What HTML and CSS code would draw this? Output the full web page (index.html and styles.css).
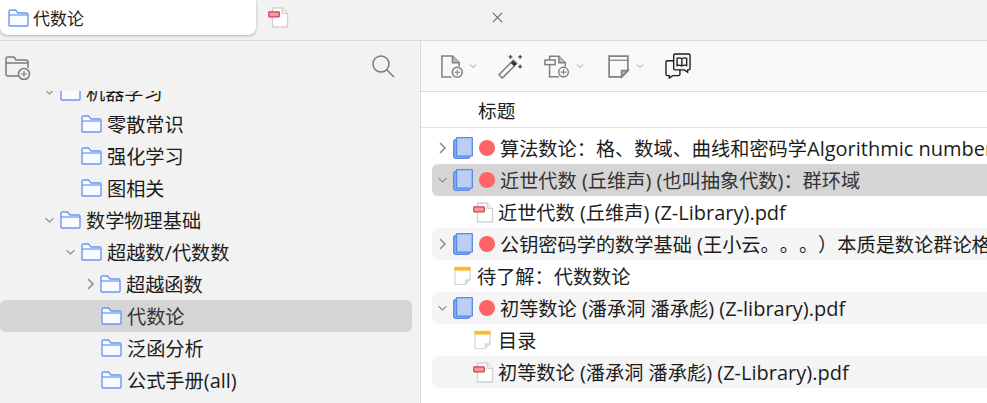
FILE: index.html
```html
<!DOCTYPE html>
<html lang="zh">
<head>
  <meta charset="UTF-8">
  <title>代数论</title>
  <link rel="stylesheet" href="styles.css">
</head>
<body>

<svg class="defs" width="0" height="0">
  <symbol id="folder" viewBox="0 0 21 18">
    <path d="M1 16V2.500Q1 1 2.500 1H7.500L10 4H18.700Q20 4 20 5.500V16Q20 17 19 17H2Q1 17 1 16Z" fill="#f8fbff" stroke="#6d97f0" stroke-width="1.400"/>
    <path d="M1 6H20" stroke="#6d97f0" stroke-width="1.200"/>
  </symbol>
  <symbol id="book" viewBox="0 0 20 22">
    <rect x="0.700" y="2.500" width="16" height="18.800" rx="2" fill="#8fadf0" stroke="#5b87e8" stroke-width="1.300"/>
    <rect x="3.500" y="0.700" width="15.800" height="18.500" rx="0.500" fill="#bccdf4" stroke="#5b87e8" stroke-width="1.300"/>
  </symbol>
  <symbol id="pdf" viewBox="0 0 21 21">
    <path d="M4.500 1H14L19.500 6.500V20H4.500Z" fill="#fff" stroke="#d2d2d2" stroke-width="1.300"/>
    <path d="M14 1V6.500H19.500" fill="#f0f0f0" stroke="#d2d2d2" stroke-width="1.200"/>
    <rect x="0.800" y="4.800" width="10.500" height="5" rx="0.500" fill="#f39aa5" stroke="#d63c50" stroke-width="1.200"/>
  </symbol>
  <symbol id="note" viewBox="0 0 18 20">
    <path d="M1 1H17V14L12 19H1Z" fill="#fff" stroke="#d4d4d4" stroke-width="1.300"/>
    <path d="M17 14H12V19Z" fill="#e2e2e2" stroke="#d4d4d4"/>
    <rect x="0.500" y="0.300" width="17" height="4" fill="#fdb92c"/>
  </symbol>
  <symbol id="chev-right" viewBox="0 0 10 14">
    <path d="M2.500 2L7.500 7L2.500 12" fill="none" stroke="#8a8a8a" stroke-width="1.500"/>
  </symbol>
  <symbol id="chev-down" viewBox="0 0 14 10">
    <path d="M2 2.500L7 7.500L12 2.500" fill="none" stroke="#8a8a8a" stroke-width="1.400"/>
  </symbol>
  <symbol id="caret" viewBox="0 0 8 6">
    <path d="M1 1.500L4 4.500L7 1.500" fill="none" stroke="#9a9a9a" stroke-width="1"/>
  </symbol>
</svg>

<div class="tabbar">
  <div class="tab tab-active">
    <svg class="ic-folder"><use href="#folder"/></svg>
    <span>代数论</span>
  </div>
  <div class="tab tab-other">
    <svg class="ic-tabpdf"><use href="#pdf"/></svg>
    <svg class="ic-close" viewBox="0 0 12 12"><path d="M1 1L11 11M11 1L1 11" stroke="#666" stroke-width="1.200"/></svg>
  </div>
</div>

<div class="main">
  <div class="sidebar">
    <div class="side-tools">
      <svg class="ic-newcol" viewBox="0 0 26 24" fill="none" stroke="#7a7a7a" stroke-width="1.500">
        <path d="M14 20H3Q1 20 1 18V3Q1 1 3 1H9L11 4H21Q23 4 23 6V12"/>
        <path d="M1 7H23"/>
        <circle cx="19" cy="18" r="5.500" fill="#f2f2f2"/>
        <path d="M19 15V21M16 18H22" stroke-width="1.200"/>
      </svg>
      <svg class="ic-search" viewBox="0 0 24 24" fill="none" stroke="#7a7a7a" stroke-width="1.500">
        <circle cx="10" cy="10" r="8"/>
        <path d="M15.500 15.500L23 23"/>
      </svg>
    </div>
    <div class="tree">
      <div class="tree-inner">
        <div class="node lv1"><svg class="ic-down"><use href="#chev-down"/></svg><svg class="ic-folder"><use href="#folder"/></svg><span>机器学习</span></div>
        <div class="node lv2"><svg class="ic-folder"><use href="#folder"/></svg><span>零散常识</span></div>
        <div class="node lv2"><svg class="ic-folder"><use href="#folder"/></svg><span>强化学习</span></div>
        <div class="node lv2"><svg class="ic-folder"><use href="#folder"/></svg><span>图相关</span></div>
        <div class="node lv1"><svg class="ic-down"><use href="#chev-down"/></svg><svg class="ic-folder"><use href="#folder"/></svg><span>数学物理基础</span></div>
        <div class="node lv2"><svg class="ic-down"><use href="#chev-down"/></svg><svg class="ic-folder"><use href="#folder"/></svg><span>超越数<b class="lat">/</b>代数数</span></div>
        <div class="node lv3"><svg class="ic-right"><use href="#chev-right"/></svg><svg class="ic-folder"><use href="#folder"/></svg><span>超越函数</span></div>
        <div class="node lv3 selected"><svg class="ic-folder"><use href="#folder"/></svg><span>代数论</span></div>
        <div class="node lv3"><svg class="ic-folder"><use href="#folder"/></svg><span>泛函分析</span></div>
        <div class="node lv3"><svg class="ic-folder"><use href="#folder"/></svg><span>公式手册<b class="lat">(all)</b></span></div>
        <div class="node lv3"><svg class="ic-folder"><use href="#folder"/></svg></div>
      </div>
    </div>
  </div>

  <div class="content">
    <div class="toolbar">
      <div class="tool">
        <svg class="ic-tool" viewBox="0 0 24 26" fill="none" stroke="#808080" stroke-width="1.600">
          <path d="M12 24H2V2H13L20 9V13"/>
          <path d="M13 2V9H20" fill="#bdbdbd"/>
          <circle cx="18" cy="19" r="5.200" fill="#f9f9f9"/>
          <path d="M18 16V22M15 19H21" stroke-width="1.200"/>
        </svg>
        <svg class="ic-caret"><use href="#caret"/></svg>
      </div>
      <div class="tool">
        <svg class="ic-wand" viewBox="0 0 26 26" fill="none" stroke="#808080" stroke-width="1.600">
          <path d="M1 21.500L16 6.500L19.500 10L4.500 25Z"/>
          <path d="M14.500 8L18 11.500" stroke="#333" stroke-width="3.500"/>
          <path d="M13 1V5M11 3H15M23 1V5M21 3H25M23 11V15M21 13H25" stroke="#444" stroke-width="1.300"/>
        </svg>
      </div>
      <div class="tool">
        <svg class="ic-tool ic-wide" viewBox="0 0 28 26" fill="none" stroke="#808080" stroke-width="1.600">
          <path d="M16 24H6V2H16L23 9V13"/>
          <path d="M16 2V9H23" fill="#bdbdbd"/>
          <rect x="1" y="6" width="11" height="5" fill="#f9f9f9"/>
          <circle cx="21" cy="19" r="5.200" fill="#f9f9f9"/>
          <path d="M21 16V22M18 19H24" stroke-width="1.200"/>
        </svg>
        <svg class="ic-caret"><use href="#caret"/></svg>
      </div>
      <div class="tool tool-note">
        <svg class="ic-tool" viewBox="0 0 22 24" fill="none" stroke="#808080" stroke-width="1.600">
          <path d="M2 2H20V16L14 22H2Z"/>
          <path d="M2 6H20" stroke-width="1.200"/>
          <path d="M20 16H14V22Z" fill="#bdbdbd"/>
        </svg>
        <svg class="ic-caret"><use href="#caret"/></svg>
      </div>
      <div class="tool">
        <svg class="ic-chat" viewBox="0 0 27 27" fill="none" stroke="#1d1d1d" stroke-width="1.400">
          <path d="M9 2.500Q9 1 10.500 1H24.500Q26 1 26 2.500V16Q26 17.500 24.500 17.500H23.500V20L20 17.500H10.500Q9 17.500 9 16Z"/>
          <path d="M9 8H2.500Q1 8 1 9.500V22Q1 23.500 2.500 23.500H4.500V26L8 23.500H14Q15.500 23.500 15.500 22V17.500"/>
          <path d="M17.500 6Q15 4.500 12.500 5.500V13Q15 12 17.500 13.500Q20 12 22.500 13V5.500Q20 4.500 17.500 6V13.500"/>
        </svg>
      </div>
    </div>

    <div class="col-head"><span>标题</span></div>

    <div class="items">
      <div class="row">
        <svg class="ic-right"><use href="#chev-right"/></svg>
        <svg class="ic-book"><use href="#book"/></svg><i class="dot"></i>
        <span>算法数论：格、数域、曲线和密码学<b class="lat">Algorithmic number</b></span>
      </div>
      <div class="row row-selected">
        <svg class="ic-down"><use href="#chev-down"/></svg>
        <svg class="ic-book"><use href="#book"/></svg><i class="dot"></i>
        <span>近世代数<b class="lat"> (</b>丘维声<b class="lat">) (</b>也叫抽象代数<b class="lat">)</b>：群环域</span>
      </div>
      <div class="row child">
        <svg class="ic-pdf"><use href="#pdf"/></svg>
        <span>近世代数<b class="lat"> (</b>丘维声<b class="lat">) (Z-Library).pdf</b></span>
      </div>
      <div class="row striped">
        <svg class="ic-right"><use href="#chev-right"/></svg>
        <svg class="ic-book"><use href="#book"/></svg><i class="dot"></i>
        <span>公钥密码学的数学基础<b class="lat"> (</b>王小云。。。）本质是数论群论格</span>
      </div>
      <div class="row top-note">
        <svg class="ic-note"><use href="#note"/></svg>
        <span>待了解：代数数论</span>
      </div>
      <div class="row striped">
        <svg class="ic-down"><use href="#chev-down"/></svg>
        <svg class="ic-book"><use href="#book"/></svg><i class="dot"></i>
        <span>初等数论<b class="lat"> (</b>潘承洞<b class="lat"> </b>潘承彪<b class="lat">) (Z-library).pdf</b></span>
      </div>
      <div class="row child">
        <svg class="ic-note ic-note-child"><use href="#note"/></svg>
        <span>目录</span>
      </div>
      <div class="row child striped">
        <svg class="ic-pdf"><use href="#pdf"/></svg>
        <span>初等数论<b class="lat"> (</b>潘承洞<b class="lat"> </b>潘承彪<b class="lat">) (Z-Library).pdf</b></span>
      </div>
    </div>
  </div>
</div>

</body>
</html>
```

FILE: styles.css
```css
* {
  box-sizing: border-box;
}
html, body {
  height: 100%;
}
body {
  margin: 0;
  overflow: hidden;
  display: flex;
  flex-direction: column;
  font-family: "Open Sans", "Noto Sans CJK SC", sans-serif;
  font-size: 19.2px;
  color: #1c1c1c;
  background-color: #f2f2f2;
  text-spacing-trim: space-all;
}
svg {
  display: block;
  flex: none;
}
.defs {
  position: absolute;
}
/* latin runs are a bit wider in the original font */
.lat {
  font-weight: normal;
  font-size: 20px;
}

/* tab bar */
.tabbar {
  display: flex;
  height: 41px;
  flex: none;
  background-color: #f2f2f2;
  border-bottom: 1px solid #dadada;
}
.tab {
  display: flex;
  align-items: center;
}
.tab-active {
  width: 256px;
  height: 35px;
  padding-left: 8px;
  gap: 4px;
  font-size: 17px;
  background-color: #fff;
  border-radius: 0 0 8px 8px;
  box-shadow: 0 1px 3px rgba(0, 0, 0, 0.28);
}
.tab-other {
  height: 35px;
  padding-left: 12px;
}
.ic-tabpdf {
  width: 21px;
  height: 21px;
}
.ic-close {
  width: 11px;
  height: 11px;
  margin-left: 203px;
}

/* layout */
.main {
  flex: 1;
  display: flex;
  min-height: 0;
}
.sidebar {
  width: 421px;
  flex: none;
  display: flex;
  flex-direction: column;
  border-right: 1px solid #dadada;
}
.side-tools {
  height: 50px;
  flex: none;
  display: flex;
  align-items: center;
  justify-content: space-between;
  padding: 0 25px 0 5px;
}
.ic-newcol {
  width: 26px;
  height: 24px;
  margin-top: 3px;
}
.ic-search {
  width: 24px;
  height: 24px;
}
.tree {
  flex: 1;
  overflow: hidden;
}
.tree-inner {
  margin-top: -15px;
}
.node {
  height: 32px;
  width: 412px;
  display: flex;
  align-items: center;
  gap: 5px;
  border-radius: 6px;
}
.lv1 {
  padding-left: 44px;
}
.lv2 {
  padding-left: 65px;
}
.lv2 .ic-folder:first-child {
  margin-left: 16px;
}
.lv3 {
  padding-left: 85px;
}
.lv3 .ic-folder:first-child {
  margin-left: 16px;
}
.lv3 .ic-right {
  margin-right: -1px;
}
.selected {
  background-color: #d5d5d5;
  color: #333;
}
.ic-folder {
  width: 21px;
  height: 18px;
}
.ic-down {
  width: 11px;
  height: 8px;
}
.ic-right {
  width: 11px;
  height: 14px;
}

/* item pane */
.content {
  flex: 1;
  min-width: 0;
  display: flex;
  flex-direction: column;
  overflow: hidden;
  background-color: #fff;
}
.toolbar {
  height: 51px;
  flex: none;
  display: flex;
  align-items: center;
  padding-left: 19px;
  gap: 21px;
  background-color: #f9f9f9;
  border-bottom: 1px solid #dadada;
}
.tool {
  display: flex;
  align-items: center;
  gap: 6px;
}
.tool-note {
  margin-left: 2px;
}
.ic-tool {
  width: 23px;
  height: 25px;
}
.ic-wide {
  width: 26px;
}
.ic-wand {
  width: 25px;
  height: 25px;
}
.ic-caret {
  width: 8px;
  height: 6px;
}
.ic-chat {
  width: 26px;
  height: 26px;
}
.col-head {
  height: 36px;
  flex: none;
  display: flex;
  align-items: center;
  padding-left: 57px;
  font-size: 18.67px;
  border-bottom: 1px solid #e2e2e2;
}
.items {
  padding-top: 4px;
}
.row {
  height: 32px;
  margin-left: 11px;
  padding-left: 5px;
  display: flex;
  align-items: center;
  white-space: nowrap;
  border-radius: 6px 0 0 6px;
}
.row .ic-right,
.row .ic-down {
  margin-right: 5px;
}
.row-selected {
  background-color: #d5d5d5;
  color: #333;
}
.striped {
  background-color: #f5f5f5;
}
.child {
  padding-left: 41px;
}
.top-note {
  padding-left: 22px;
}
.ic-book {
  width: 20px;
  height: 22px;
}
.dot {
  width: 16px;
  height: 16px;
  margin: 0 5px 0 6px;
  flex: none;
  border-radius: 50%;
  background-color: #ff6467;
}
.ic-pdf {
  width: 21px;
  height: 21px;
  margin-right: 4px;
}
.ic-note {
  width: 17px;
  height: 20px;
  margin-right: 6px;
}
.ic-note-child {
  margin-left: 1px;
  margin-right: 7px;
}
```
